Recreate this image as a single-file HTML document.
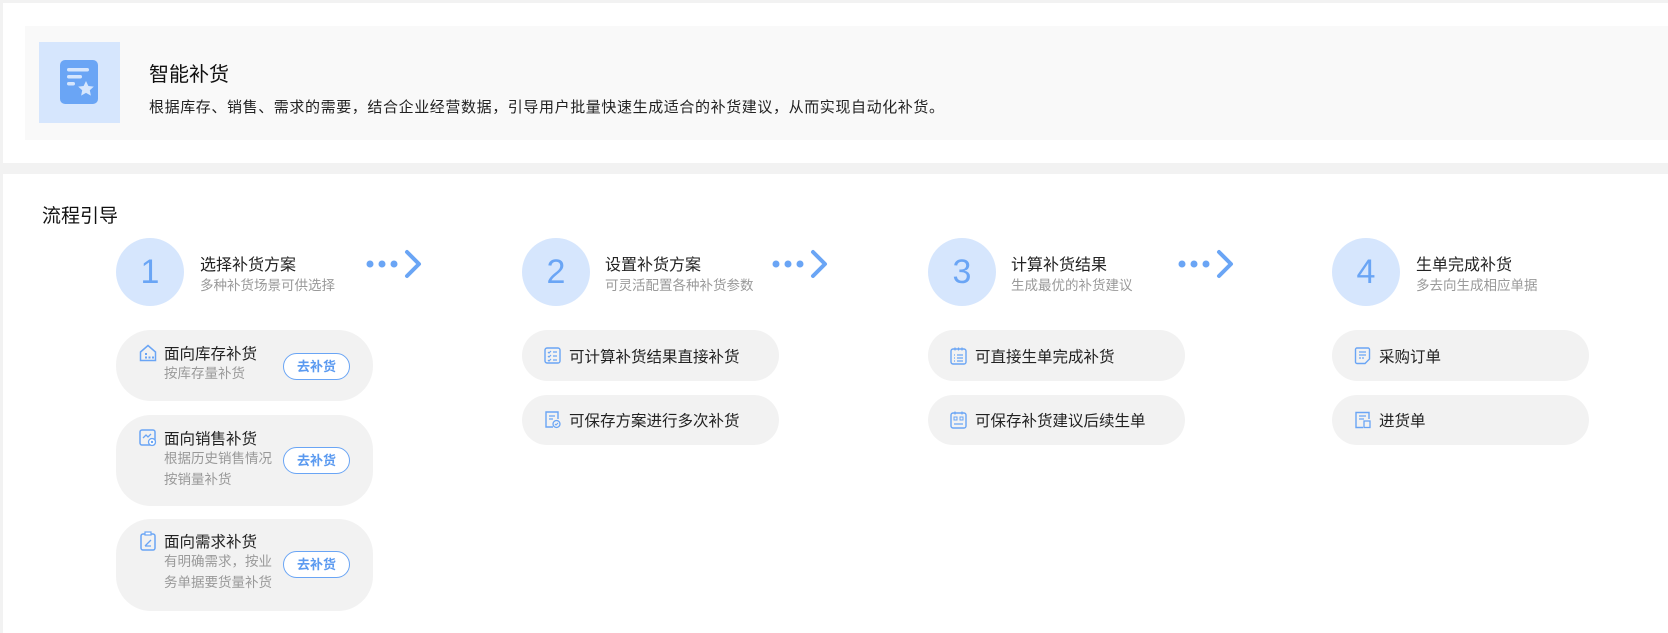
<!DOCTYPE html>
<html><head><meta charset="utf-8"><style>
*{margin:0;padding:0;box-sizing:border-box}
body{width:1668px;height:633px;background:#f2f2f2;font-family:"Liberation Sans","Noto Sans CJK SC",sans-serif;position:relative;overflow:hidden;color:#222}
.a{position:absolute}
.card1{left:3px;top:3px;width:1665px;height:160px;background:#fff}
.panel{left:25px;top:26px;width:1643px;height:114px;background:#f9f9f9}
.card2{left:3px;top:174px;width:1665px;height:459px;background:#fff}
.circ{width:68px;height:68px;border-radius:50%;background:#d6e6fd;color:#6aa5f5;font-size:34px;text-align:center;line-height:68px;top:238px}
.st{font-size:16px;color:#222;top:251px;white-space:nowrap}
.ss{font-size:13.5px;color:#999;top:274px;white-space:nowrap}
.pill{background:#f2f2f2;border-radius:35px;height:50px;width:257px;font-size:15.5px;color:#222;display:flex;align-items:center;padding-left:22px;white-space:nowrap}
.pill svg{margin-right:8px;flex:none}
.big{display:block;padding-left:0}
.btn{position:absolute;left:167px;width:67px;height:27px;border:1px solid #6aa5f5;border-radius:14px;color:#5b9af0;font-weight:bold;font-size:13px;text-align:center;line-height:25px;background:#fff}
.bt{position:absolute;left:48px;font-size:15.5px;color:#222;white-space:nowrap}
.bs{position:absolute;left:48px;font-size:13.5px;color:#999;line-height:21px;width:112px;white-space:normal}
.bi{position:absolute;left:23px}
</style></head><body>
<div class="a card1"></div>
<div class="a panel"></div>
<div class="a" style="left:39px;top:42px;width:81px;height:81px;background:#d6e6fd"></div>
<svg class="a" style="left:60px;top:60px" width="38" height="44" viewBox="0 0 38 44"><rect x="0" y="0" width="38" height="44" rx="5" fill="#6aa5f5"/><rect x="7" y="8" width="22" height="3.5" rx="1.7" fill="#d6e6fd"/><rect x="7" y="15" width="15" height="3.5" rx="1.7" fill="#d6e6fd"/><rect x="7" y="22" width="8" height="3.5" rx="1.7" fill="#d6e6fd"/><path d="M26 21l2.4 5 5.4.6-4 3.7 1.1 5.3-4.9-2.7-4.9 2.7 1.1-5.3-4-3.7 5.4-.6z" fill="#d6e6fd"/></svg>
<div class="a" style="left:149px;top:58px;font-size:20px;color:#111">智能补货</div>
<div class="a" style="left:149px;top:96px;font-size:15px;letter-spacing:0.6px;color:#222;white-space:nowrap">根据库存、销售、需求的需要，结合企业经营数据，引导用户批量快速生成适合的补货建议，从而实现自动化补货。</div>
<div class="a card2"></div>
<div class="a" style="left:42px;top:201px;font-size:19px;color:#111">流程引导</div>

<div class="a circ" style="left:116px">1</div>
<div class="a st" style="left:200px">选择补货方案</div>
<div class="a ss" style="left:200px">多种补货场景可供选择</div>
<div class="a circ" style="left:522px">2</div>
<div class="a st" style="left:605px">设置补货方案</div>
<div class="a ss" style="left:605px">可灵活配置各种补货参数</div>
<div class="a circ" style="left:928px">3</div>
<div class="a st" style="left:1011px">计算补货结果</div>
<div class="a ss" style="left:1011px">生成最优的补货建议</div>
<div class="a circ" style="left:1332px">4</div>
<div class="a st" style="left:1416px">生单完成补货</div>
<div class="a ss" style="left:1416px">多去向生成相应单据</div>

<svg class="a" style="left:366px;top:249px" width="62" height="34" viewBox="0 0 62 34"><circle cx="4" cy="15" r="3.5" fill="#6aa5f5"/><circle cx="16" cy="15" r="3.5" fill="#6aa5f5"/><circle cx="28" cy="15" r="3.5" fill="#6aa5f5"/><path d="M41 3l12 12-12 12" fill="none" stroke="#6aa5f5" stroke-width="4" stroke-linecap="round" stroke-linejoin="round"/></svg>
<svg class="a" style="left:772px;top:249px" width="62" height="34" viewBox="0 0 62 34"><circle cx="4" cy="15" r="3.5" fill="#6aa5f5"/><circle cx="16" cy="15" r="3.5" fill="#6aa5f5"/><circle cx="28" cy="15" r="3.5" fill="#6aa5f5"/><path d="M41 3l12 12-12 12" fill="none" stroke="#6aa5f5" stroke-width="4" stroke-linecap="round" stroke-linejoin="round"/></svg>
<svg class="a" style="left:1178px;top:249px" width="62" height="34" viewBox="0 0 62 34"><circle cx="4" cy="15" r="3.5" fill="#6aa5f5"/><circle cx="16" cy="15" r="3.5" fill="#6aa5f5"/><circle cx="28" cy="15" r="3.5" fill="#6aa5f5"/><path d="M41 3l12 12-12 12" fill="none" stroke="#6aa5f5" stroke-width="4" stroke-linecap="round" stroke-linejoin="round"/></svg>

<!-- col1 -->
<div class="a pill big" style="left:116px;top:330px;height:71px">
 <svg class="bi" style="top:14px" width="18" height="18" viewBox="0 0 18 18"><path d="M1.5 8L9 1.5 16.5 8V16.5H1.5z" fill="none" stroke="#6aa5f5" stroke-width="1.5"/><g fill="#6aa5f5"><rect x="6" y="9" width="2" height="2"/><rect x="6" y="12.5" width="2" height="2"/><rect x="9.5" y="12.5" width="2" height="2"/><rect x="13" y="12.5" width="2" height="2"/></g></svg>
 <div class="bt" style="top:12px">面向库存补货</div>
 <div class="bs" style="top:33px">按库存量补货</div>
 <div class="btn" style="top:23px">去补货</div>
</div>
<div class="a pill big" style="left:116px;top:415px;height:91px">
 <svg class="bi" style="top:14px" width="18" height="18" viewBox="0 0 18 18"><rect x="1" y="1" width="15" height="15" rx="2" fill="none" stroke="#6aa5f5" stroke-width="1.5"/><path d="M4 9l3-3 2 2 3-3" fill="none" stroke="#6aa5f5" stroke-width="1.3"/><circle cx="13" cy="13" r="3.5" fill="#fff" stroke="#6aa5f5" stroke-width="1.3"/><circle cx="13" cy="13" r="1.2" fill="#6aa5f5"/></svg>
 <div class="bt" style="top:12px">面向销售补货</div>
 <div class="bs" style="top:33px">根据历史销售情况按销量补货</div>
 <div class="btn" style="top:32px">去补货</div>
</div>
<div class="a pill big" style="left:116px;top:519px;height:92px">
 <svg class="bi" style="top:12px" width="18" height="20" viewBox="0 0 18 20"><rect x="2" y="3" width="14" height="16" rx="2" fill="none" stroke="#6aa5f5" stroke-width="1.5"/><rect x="6" y="1" width="6" height="3" fill="#fff" stroke="#6aa5f5" stroke-width="1.2"/><path d="M6 15l6-6M6 15h6" fill="none" stroke="#6aa5f5" stroke-width="1.3"/></svg>
 <div class="bt" style="top:11px">面向需求补货</div>
 <div class="bs" style="top:32px">有明确需求，按业务单据要货量补货</div>
 <div class="btn" style="top:32px">去补货</div>
</div>

<!-- col2 -->
<div class="a pill" style="left:522px;top:330px;height:51px"><svg width="17" height="17" viewBox="0 0 17 17"><rect x="1" y="1" width="15" height="15" rx="2" fill="none" stroke="#6aa5f5" stroke-width="1.4"/><path d="M4 5l1 1 2-2M4 9l1 1 2-2M4 13l1 1 2-2M9 5h4M9 9h4M9 13h4" fill="none" stroke="#6aa5f5" stroke-width="1.2"/></svg>可计算补货结果直接补货</div>
<div class="a pill" style="left:522px;top:395px;height:50px"><svg width="17" height="18" viewBox="0 0 17 18"><path d="M9 16H2V1h12v7" fill="none" stroke="#6aa5f5" stroke-width="1.4"/><path d="M5 5h6M5 8h4" stroke="#6aa5f5" stroke-width="1.2"/><circle cx="12.5" cy="13" r="3.5" fill="none" stroke="#6aa5f5" stroke-width="1.3"/><path d="M11 13l1 1 2-2" fill="none" stroke="#6aa5f5" stroke-width="1.1"/></svg>可保存方案进行多次补货</div>
<!-- col3 -->
<div class="a pill" style="left:928px;top:330px;height:51px"><svg width="17" height="18" viewBox="0 0 17 18"><rect x="1" y="2" width="15" height="15" rx="2" fill="none" stroke="#6aa5f5" stroke-width="1.4"/><path d="M5 0.5v3M8.5 0.5v3M12 0.5v3M4 8h1M7 8h6M4 11h1M7 11h6M4 14h1M7 14h6" stroke="#6aa5f5" stroke-width="1.2"/></svg>可直接生单完成补货</div>
<div class="a pill" style="left:928px;top:395px;height:50px"><svg width="17" height="18" viewBox="0 0 17 18"><rect x="1" y="2" width="15" height="15" rx="2" fill="none" stroke="#6aa5f5" stroke-width="1.4"/><path d="M5 0.5v3M12 0.5v3M4 13h9" stroke="#6aa5f5" stroke-width="1.2"/><rect x="4" y="6" width="3" height="3" fill="none" stroke="#6aa5f5"/><rect x="10" y="6" width="3" height="3" fill="none" stroke="#6aa5f5"/></svg>可保存补货建议后续生单</div>
<!-- col4 -->
<div class="a pill" style="left:1332px;top:330px;height:51px"><svg width="17" height="18" viewBox="0 0 17 18"><path d="M3 1h11a1.5 1.5 0 0 1 1.5 1.5V12l-4.5 4.5H3A1.5 1.5 0 0 1 1.5 15V2.5A1.5 1.5 0 0 1 3 1z" fill="none" stroke="#6aa5f5" stroke-width="1.4"/><path d="M5 5h7M5 8h7M5 11h2M8 11h2" stroke="#6aa5f5" stroke-width="1.2"/></svg>采购订单</div>
<div class="a pill" style="left:1332px;top:395px;height:50px"><svg width="17" height="18" viewBox="0 0 17 18"><path d="M9 16.5H2V1.5h13V8" fill="none" stroke="#6aa5f5" stroke-width="1.4"/><path d="M5 5h7M5 8h5" stroke="#6aa5f5" stroke-width="1.2"/><rect x="10" y="10" width="6" height="6.5" fill="none" stroke="#6aa5f5" stroke-width="1.3"/></svg>进货单</div>
</body></html>
